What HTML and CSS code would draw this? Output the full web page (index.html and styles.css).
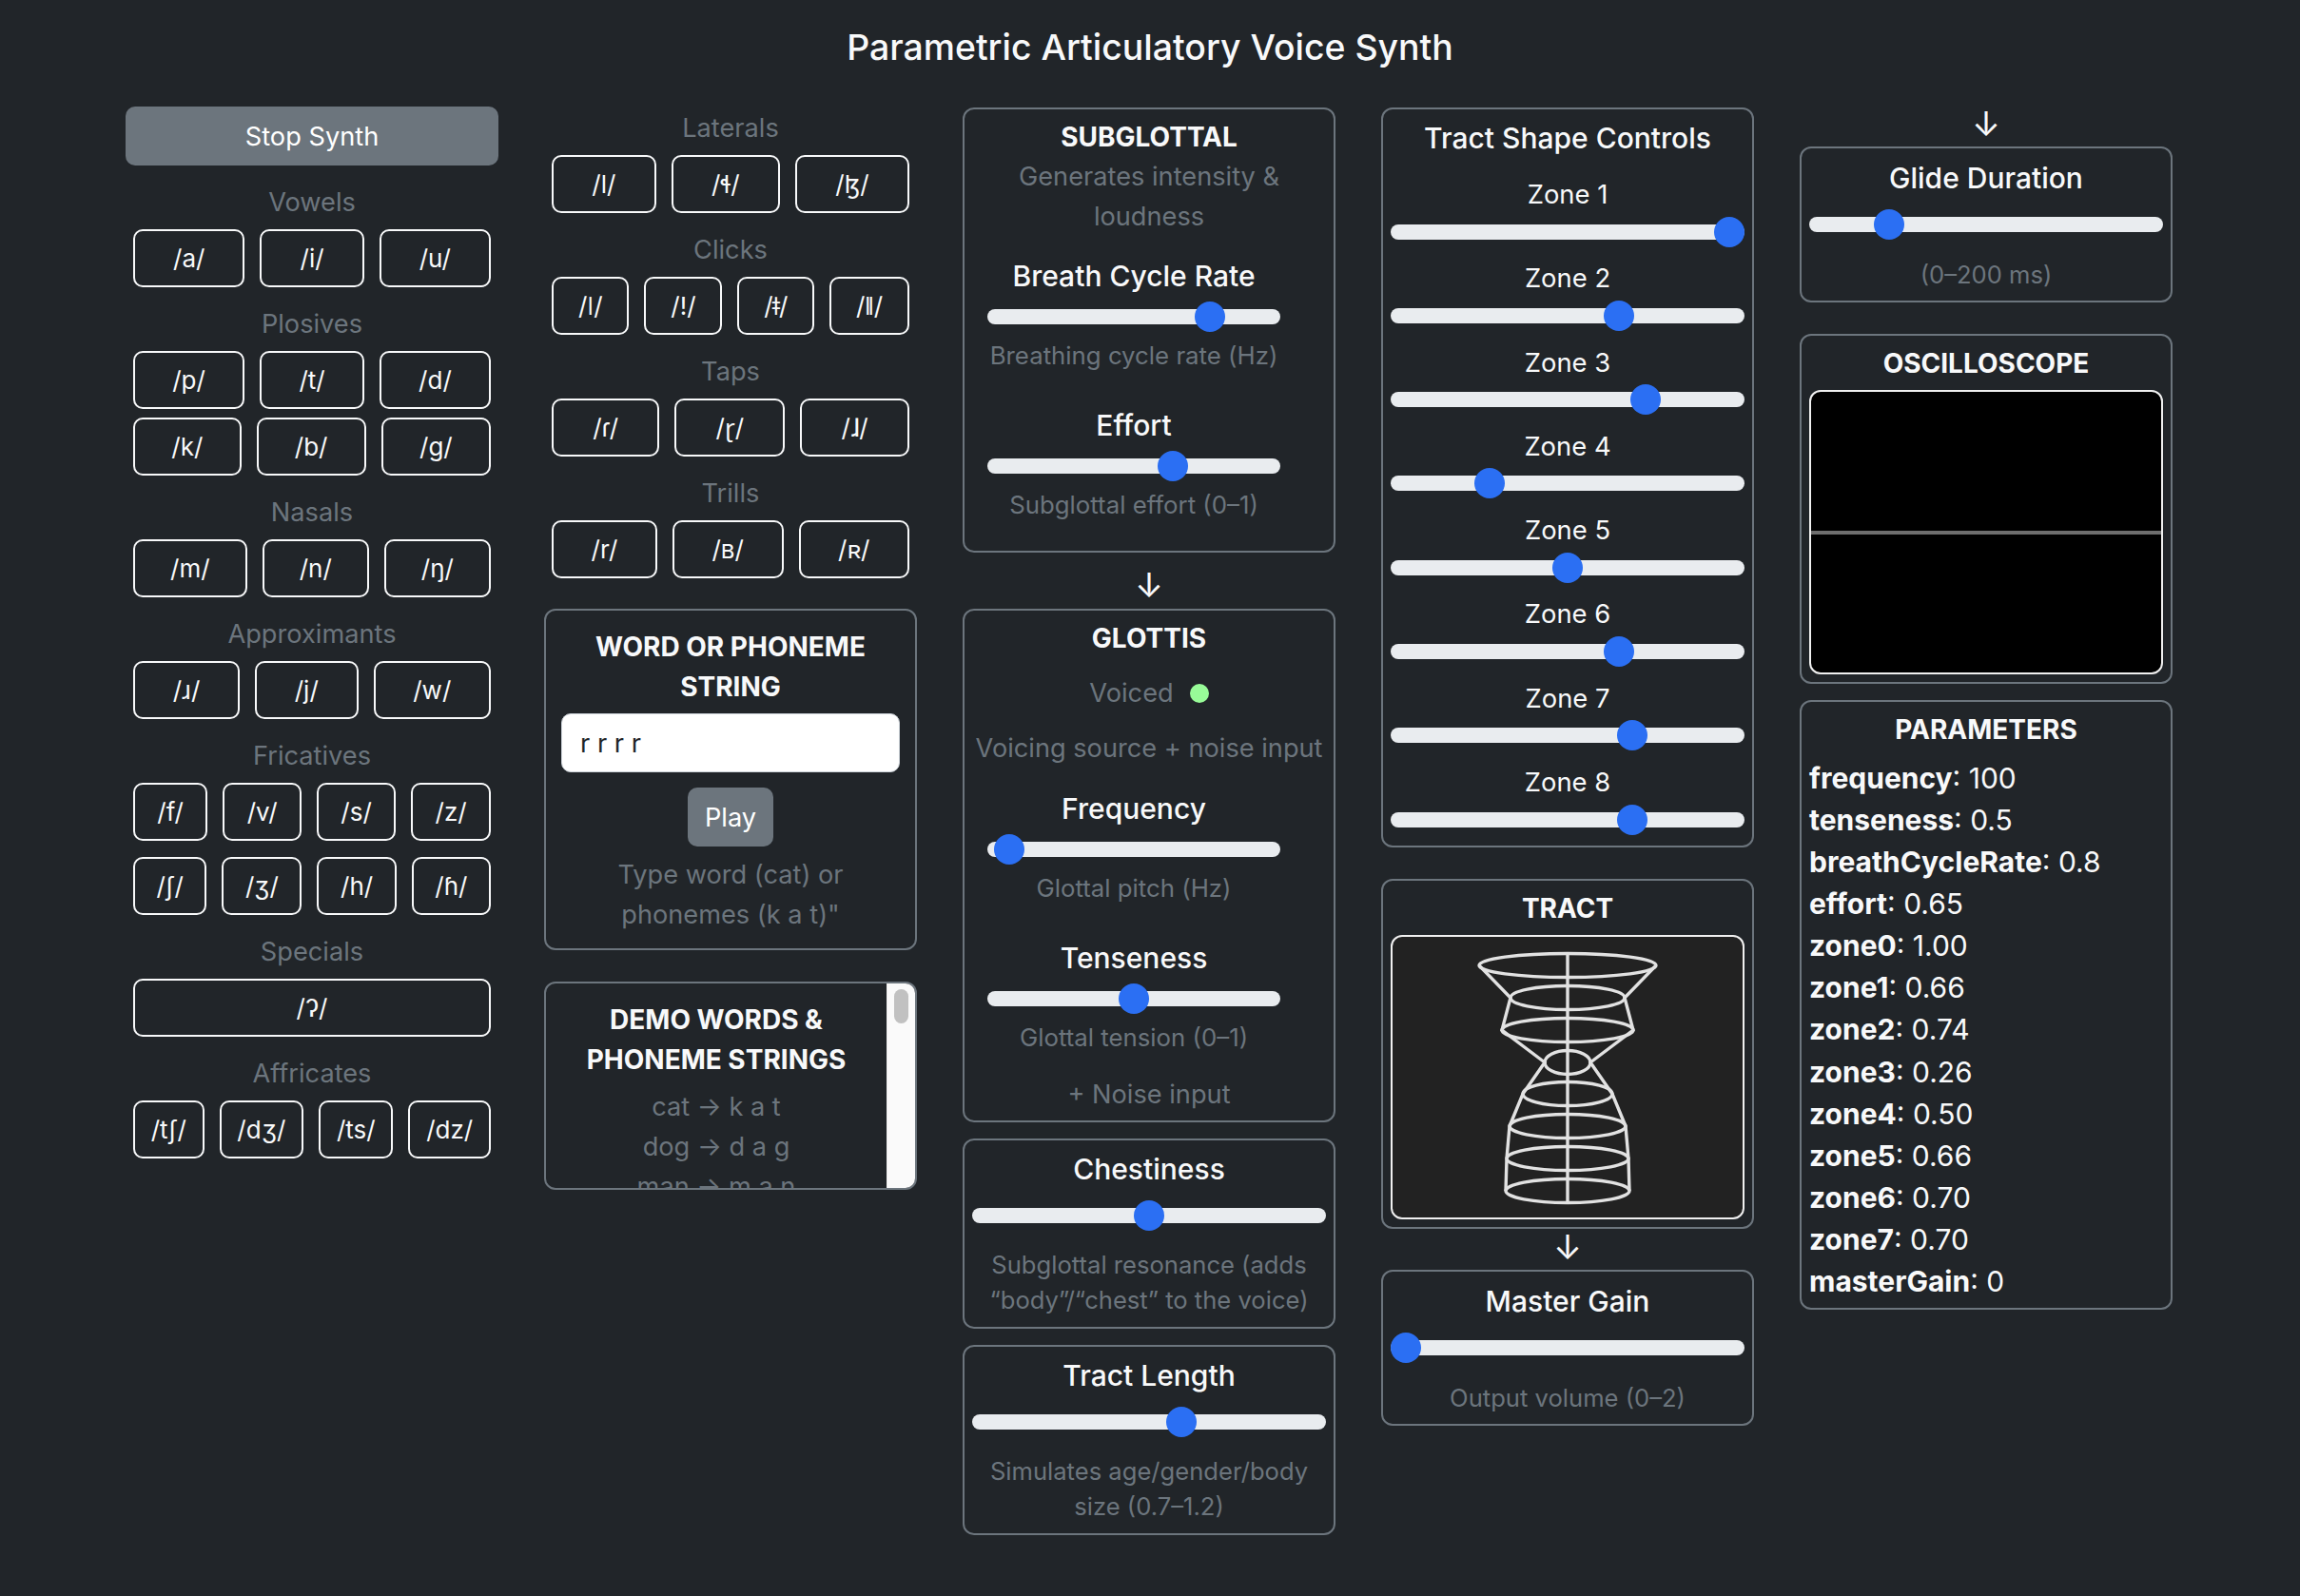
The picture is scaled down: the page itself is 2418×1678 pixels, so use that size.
FILE: index.html
```html
<!DOCTYPE html>
<html lang="en">
<head>
  <meta charset="UTF-8">
  <meta name="viewport" content="width=device-width, initial-scale=1.0">
  <title>Parametric Articulatory Voice Synth</title>
  <link rel="stylesheet" href="styles.css">
</head>
<body>

  <h1 class="page-title">Parametric Articulatory Voice Synth</h1>

  <main class="columns">

    <section class="col">
      <button class="btn-solid btn-stop">Stop Synth</button>

      <div class="group-label">Vowels</div>
      <div class="btn-row"><button class="btn-ipa">/a/</button><button class="btn-ipa">/i/</button><button class="btn-ipa">/u/</button></div>

      <div class="group-label">Plosives</div>
      <div class="btn-row"><button class="btn-ipa">/p/</button><button class="btn-ipa">/t/</button><button class="btn-ipa">/d/</button></div>
      <div class="btn-row row-close"><button class="btn-ipa">/k/</button><button class="btn-ipa">/b/</button><button class="btn-ipa">/g/</button></div>

      <div class="group-label">Nasals</div>
      <div class="btn-row"><button class="btn-ipa">/m/</button><button class="btn-ipa">/n/</button><button class="btn-ipa">/ŋ/</button></div>

      <div class="group-label">Approximants</div>
      <div class="btn-row"><button class="btn-ipa">/ɹ/</button><button class="btn-ipa">/j/</button><button class="btn-ipa">/w/</button></div>

      <div class="group-label">Fricatives</div>
      <div class="btn-row"><button class="btn-ipa">/f/</button><button class="btn-ipa">/v/</button><button class="btn-ipa">/s/</button><button class="btn-ipa">/z/</button></div>
      <div class="btn-row row-far"><button class="btn-ipa">/ʃ/</button><button class="btn-ipa">/ʒ/</button><button class="btn-ipa">/h/</button><button class="btn-ipa">/ɦ/</button></div>

      <div class="group-label">Specials</div>
      <div class="btn-row"><button class="btn-ipa">/ʔ/</button></div>

      <div class="group-label">Affricates</div>
      <div class="btn-row"><button class="btn-ipa">/tʃ/</button><button class="btn-ipa">/dʒ/</button><button class="btn-ipa">/ts/</button><button class="btn-ipa">/dz/</button></div>
    </section>

    <section class="col">
      <div class="group-label first-label">Laterals</div>
      <div class="btn-row"><button class="btn-ipa">/l/</button><button class="btn-ipa">/ɬ/</button><button class="btn-ipa">/ɮ/</button></div>

      <div class="group-label">Clicks</div>
      <div class="btn-row"><button class="btn-ipa">/ǀ/</button><button class="btn-ipa">/ǃ/</button><button class="btn-ipa">/ǂ/</button><button class="btn-ipa">/ǁ/</button></div>

      <div class="group-label">Taps</div>
      <div class="btn-row"><button class="btn-ipa">/ɾ/</button><button class="btn-ipa">/ɽ/</button><button class="btn-ipa">/ɺ/</button></div>

      <div class="group-label">Trills</div>
      <div class="btn-row"><button class="btn-ipa">/r/</button><button class="btn-ipa">/ʙ/</button><button class="btn-ipa">/ʀ/</button></div>

      <div class="box word-box">
        <h3 class="box-title">WORD OR PHONEME STRING</h3>
        <input class="word-input" type="text" value="r r r r">
        <button class="btn-solid btn-play">Play</button>
        <p class="muted">Type word (cat) or phonemes (k a t)"</p>
      </div>

      <div class="box demo-box">
        <h3 class="box-title">DEMO WORDS &amp; PHONEME STRINGS</h3>
        <p class="muted">cat → k a t</p>
        <p class="muted">dog → d a g</p>
        <p class="muted">man → m a n</p>
        <div class="demo-scrollbar"><div class="demo-thumb"></div></div>
      </div>
    </section>

    <section class="col col-down">
      <div class="box subglottal-box">
        <h3 class="box-title">SUBGLOTTAL</h3>
        <p class="muted center">Generates intensity &amp; loudness</p>
        <div class="slider-group first-slider">
          <div class="slider-label">Breath Cycle Rate</div>
          <input class="slider" type="range" min="0" max="1" step="0.01" value="0.79">
          <div class="muted">Breathing cycle rate (Hz)</div>
        </div>
        <div class="slider-group">
          <div class="slider-label">Effort</div>
          <input class="slider" type="range" min="0" max="1" step="0.01" value="0.65">
          <div class="muted">Subglottal effort (0–1)</div>
        </div>
      </div>

      <div class="arrow arrow-big">↓</div>

      <div class="box glottis-box">
        <h3 class="box-title">GLOTTIS</h3>
        <div class="muted voiced">Voiced <span class="voiced-dot"></span></div>
        <p class="muted voicing">Voicing source + noise input</p>
        <div class="slider-group first-slider">
          <div class="slider-label">Frequency</div>
          <input class="slider" type="range" min="0" max="1" step="0.005" value="0.025">
          <div class="muted">Glottal pitch (Hz)</div>
        </div>
        <div class="slider-group">
          <div class="slider-label">Tenseness</div>
          <input class="slider" type="range" min="0" max="1" step="0.01" value="0.5">
          <div class="muted">Glottal tension (0–1)</div>
        </div>
        <div class="muted noise">+ Noise input</div>
      </div>

      <div class="box wide-box stack-box">
        <div class="slider-label">Chestiness</div>
        <input class="slider" type="range" min="0" max="1" step="0.01" value="0.5">
        <p class="small-note">Subglottal resonance (adds “body”/“chest” to the voice)</p>
      </div>

      <div class="box wide-box stack-box">
        <div class="slider-label">Tract Length</div>
        <input class="slider" type="range" min="0" max="1" step="0.01" value="0.6">
        <p class="small-note">Simulates age/gender/body size (0.7–1.2)</p>
      </div>
    </section>

    <section class="col col-down">
      <div class="box zones-box">
        <div class="slider-label zones-title">Tract Shape Controls</div>
        <div class="zone"><div class="slider-label">Zone 1</div><input class="slider" type="range" min="0" max="1" step="0.01" value="1"></div>
        <div class="zone"><div class="slider-label">Zone 2</div><input class="slider" type="range" min="0" max="1" step="0.01" value="0.66"></div>
        <div class="zone"><div class="slider-label">Zone 3</div><input class="slider" type="range" min="0" max="1" step="0.01" value="0.74"></div>
        <div class="zone"><div class="slider-label">Zone 4</div><input class="slider" type="range" min="0" max="1" step="0.01" value="0.26"></div>
        <div class="zone"><div class="slider-label">Zone 5</div><input class="slider" type="range" min="0" max="1" step="0.01" value="0.5"></div>
        <div class="zone"><div class="slider-label">Zone 6</div><input class="slider" type="range" min="0" max="1" step="0.01" value="0.66"></div>
        <div class="zone"><div class="slider-label">Zone 7</div><input class="slider" type="range" min="0" max="1" step="0.01" value="0.7"></div>
        <div class="zone"><div class="slider-label">Zone 8</div><input class="slider" type="range" min="0" max="1" step="0.01" value="0.7"></div>
      </div>

      <div class="box canvas-box gap-l">
        <h3 class="box-title">TRACT</h3>
        <div class="canvas tract-canvas">
          <svg class="tract-svg" viewBox="0 0 368 295" fill="none" stroke="#e2e2e2" stroke-width="3.4">
            <ellipse cx="184" cy="30" rx="93" ry="12.5"/>
            <ellipse cx="184" cy="64" rx="60" ry="12.5"/>
            <ellipse cx="184" cy="98" rx="69" ry="12.5"/>
            <ellipse cx="184" cy="132" rx="24" ry="12.5"/>
            <ellipse cx="184" cy="165" rx="47" ry="12.5"/>
            <ellipse cx="184" cy="199" rx="61" ry="12.5"/>
            <ellipse cx="184" cy="233" rx="64" ry="12.5"/>
            <ellipse cx="184" cy="267" rx="65" ry="12.5"/>
            <polyline points="91,30 124,64 115,98 160,132 137,165 123,199 120,233 119,267"/>
            <polyline points="277,30 244,64 253,98 208,132 231,165 245,199 248,233 249,267"/>
            <line x1="184" y1="18" x2="184" y2="279"/>
          </svg>
        </div>
      </div>

      <div class="arrow arrow-small">↓</div>

      <div class="box wide-box">
        <div class="slider-label">Master Gain</div>
        <input class="slider" type="range" min="0" max="2" step="0.01" value="0">
        <p class="small-note">Output volume (0–2)</p>
      </div>
    </section>

    <section class="col">
      <div class="arrow arrow-top">↓</div>

      <div class="box wide-box">
        <div class="slider-label">Glide Duration</div>
        <input class="slider" type="range" min="0" max="200" value="40">
        <p class="small-note">(0–200 ms)</p>
      </div>

      <div class="box canvas-box gap-l">
        <h3 class="box-title">OSCILLOSCOPE</h3>
        <div class="canvas scope-canvas"><div class="scope-line"></div></div>
      </div>

      <div class="box params-box">
        <h3 class="box-title">PARAMETERS</h3>
        <div class="param"><b>frequency</b>: 100</div>
        <div class="param"><b>tenseness</b>: 0.5</div>
        <div class="param"><b>breathCycleRate</b>: 0.8</div>
        <div class="param"><b>effort</b>: 0.65</div>
        <div class="param"><b>zone0</b>: 1.00</div>
        <div class="param"><b>zone1</b>: 0.66</div>
        <div class="param"><b>zone2</b>: 0.74</div>
        <div class="param"><b>zone3</b>: 0.26</div>
        <div class="param"><b>zone4</b>: 0.50</div>
        <div class="param"><b>zone5</b>: 0.66</div>
        <div class="param"><b>zone6</b>: 0.70</div>
        <div class="param"><b>zone7</b>: 0.70</div>
        <div class="param"><b>masterGain</b>: 0</div>
      </div>
    </section>

  </main>

</body>
</html>
```

FILE: styles.css
```css
* {
  box-sizing: border-box;
}
body {
  margin: 0;
  background-color: #212529;
  color: #f8f9fa;
  font-family: Inter, "Noto Sans", "DejaVu Sans", sans-serif;
  font-size: 27.2px;
  line-height: 42px;
}
p, h1, h3 {
  margin: 0;
}
.page-title {
  height: 112px;
  padding-top: 27px;
  font-size: 37.4px;
  line-height: 46px;
  font-weight: 500;
  text-align: center;
}
.columns {
  display: flex;
  gap: 48px;
  padding: 0 132px;
}
.col {
  width: 392px;
  flex: none;
}
.col-down {
  padding-top: 1px;
}

/* buttons */
.btn-solid {
  display: block;
  padding: 2px 0 0;
  border: none;
  border-radius: 10px;
  background-color: #6c757d;
  color: #fff;
  font: inherit;
}
.btn-stop {
  width: 100%;
  height: 62px;
}
.btn-play {
  width: 90px;
  height: 62px;
  margin: 16px auto 0;
}
.group-label {
  margin: 21px 0 10px;
  color: #6c757d;
  line-height: 36px;
  text-align: center;
}
.first-label {
  margin-top: 5px;
}
.btn-row {
  display: flex;
  gap: 16px;
  padding: 0 8px;
}
.row-close {
  margin-top: 9px;
}
.row-far {
  margin-top: 17px;
}
.btn-ipa {
  flex: 1 1 auto;
  height: 61px;
  padding: 0 12px;
  border: 2px solid #f8f9fa;
  border-radius: 10px;
  background: transparent;
  color: #f8f9fa;
  font: inherit;
  font-size: 26px;
}

/* boxes */
.box {
  padding: 8px;
  border: 2px solid #6c757d;
  border-radius: 12px;
}
.box-title {
  font-size: 28px;
  line-height: 42px;
  font-weight: 700;
  text-align: center;
}
.muted {
  color: #6c757d;
  text-align: center;
}
.center {
  padding: 0 16px;
}
.gap-l {
  margin-top: 33px;
}
.subglottal-box {
  padding-bottom: 27px;
}
.word-box {
  margin-top: 32px;
  padding: 17px 16px 14px;
}
.word-input {
  display: block;
  width: 100%;
  height: 62px;
  margin-top: 7px;
  padding: 0 19px;
  border: 1px solid #ced4da;
  border-radius: 10px;
  background: #fff;
  color: #212529;
  font: inherit;
}
.word-box .muted {
  margin-top: 9px;
}
.demo-box {
  position: relative;
  height: 219px;
  margin-top: 33px;
  padding: 17px 38px 0 8px;
  overflow: hidden;
}
.demo-box .box-title {
  margin-bottom: 8px;
}
.demo-scrollbar {
  position: absolute;
  top: 0;
  right: 0;
  bottom: 0;
  width: 30px;
  padding: 6px 7px;
  background: #fafafa;
  border-left: 1px solid #ededed;
}
.demo-thumb {
  height: 36px;
  border-radius: 8px;
  background: #c1c1c1;
}

/* sliders */
.slider {
  -webkit-appearance: none;
  appearance: none;
  display: block;
  width: 100%;
  height: 32px;
  margin: 0;
  background: transparent;
}
.slider::-webkit-slider-runnable-track {
  height: 16px;
  border-radius: 8px;
  background: #e9ecef;
}
.slider::-webkit-slider-thumb {
  -webkit-appearance: none;
  width: 32px;
  height: 32px;
  margin-top: -8px;
  border-radius: 50%;
  background: #2b6ff3;
}
.slider-label {
  font-size: 30px;
  font-weight: 500;
  text-align: center;
}
.slider-group {
  width: 308px;
  margin: 31px 0 0 16px;
}
.slider-group .slider {
  margin: 6px 0 4px;
}
.slider-group .muted {
  font-size: 25.8px;
}
.first-slider {
  margin-top: 20px;
}
.small-note {
  margin-top: 18px;
  color: #6c757d;
  font-size: 25.6px;
  line-height: 37px;
  text-align: center;
}
.wide-box {
  padding-top: 10px;
  padding-bottom: 9px;
}
.wide-box .slider {
  margin-top: 12px;
}
.stack-box {
  margin-top: 17px;
  padding-top: 9px;
  padding-bottom: 10px;
}
.stack-box .small-note {
  margin-top: 17px;
}

/* glottis */
.glottis-box {
  padding-bottom: 6px;
}
.voiced {
  display: flex;
  justify-content: center;
  align-items: center;
  gap: 17px;
  margin-top: 16px;
}
.voiced-dot {
  width: 20px;
  height: 20px;
  border-radius: 50%;
  background: #98fb98;
}
.voicing {
  margin: 16px -8px 0;
  white-space: nowrap;
}
.glottis-box .first-slider {
  margin-top: 21px;
}
.noise {
  margin-top: 18px;
}

/* arrows */
.arrow {
  color: #f8f9fa;
  font-size: 36px;
  text-align: center;
}
.arrow-big {
  height: 59px;
  line-height: 68px;
}
.arrow-small {
  height: 43px;
  line-height: 38px;
}
.arrow-top {
  height: 42px;
  line-height: 36px;
}

/* tract zones */
.zones-box {
  padding-bottom: 11px;
}
.zones-title {
  margin-top: 1px;
}
.zone {
  margin-top: 11.8px;
}
.zones-title + .zone {
  margin-top: 17px;
}
.zone .slider-label {
  font-size: 27.4px;
  font-weight: 400;
}
.zone .slider {
  margin-top: 2.5px;
}

/* canvases */
.canvas-box .box-title {
  margin-bottom: 7px;
}
.canvas {
  height: 299px;
  border: 2px solid #f0f0f0;
  border-radius: 12px;
  overflow: hidden;
}
.tract-canvas {
  background: #222;
}
.tract-svg {
  display: block;
  width: 100%;
  height: 100%;
  filter: blur(0.5px);
}
.scope-canvas {
  display: flex;
  align-items: center;
  background: #000;
}
.scope-line {
  width: 100%;
  height: 4px;
  background: #6e6e6e;
}

/* parameters */
.params-box {
  margin-top: 17px;
  padding-bottom: 6px;
}
.params-box .box-title {
  margin-bottom: 8px;
}
.param {
  font-size: 30px;
  line-height: 44.08px;
}
```
